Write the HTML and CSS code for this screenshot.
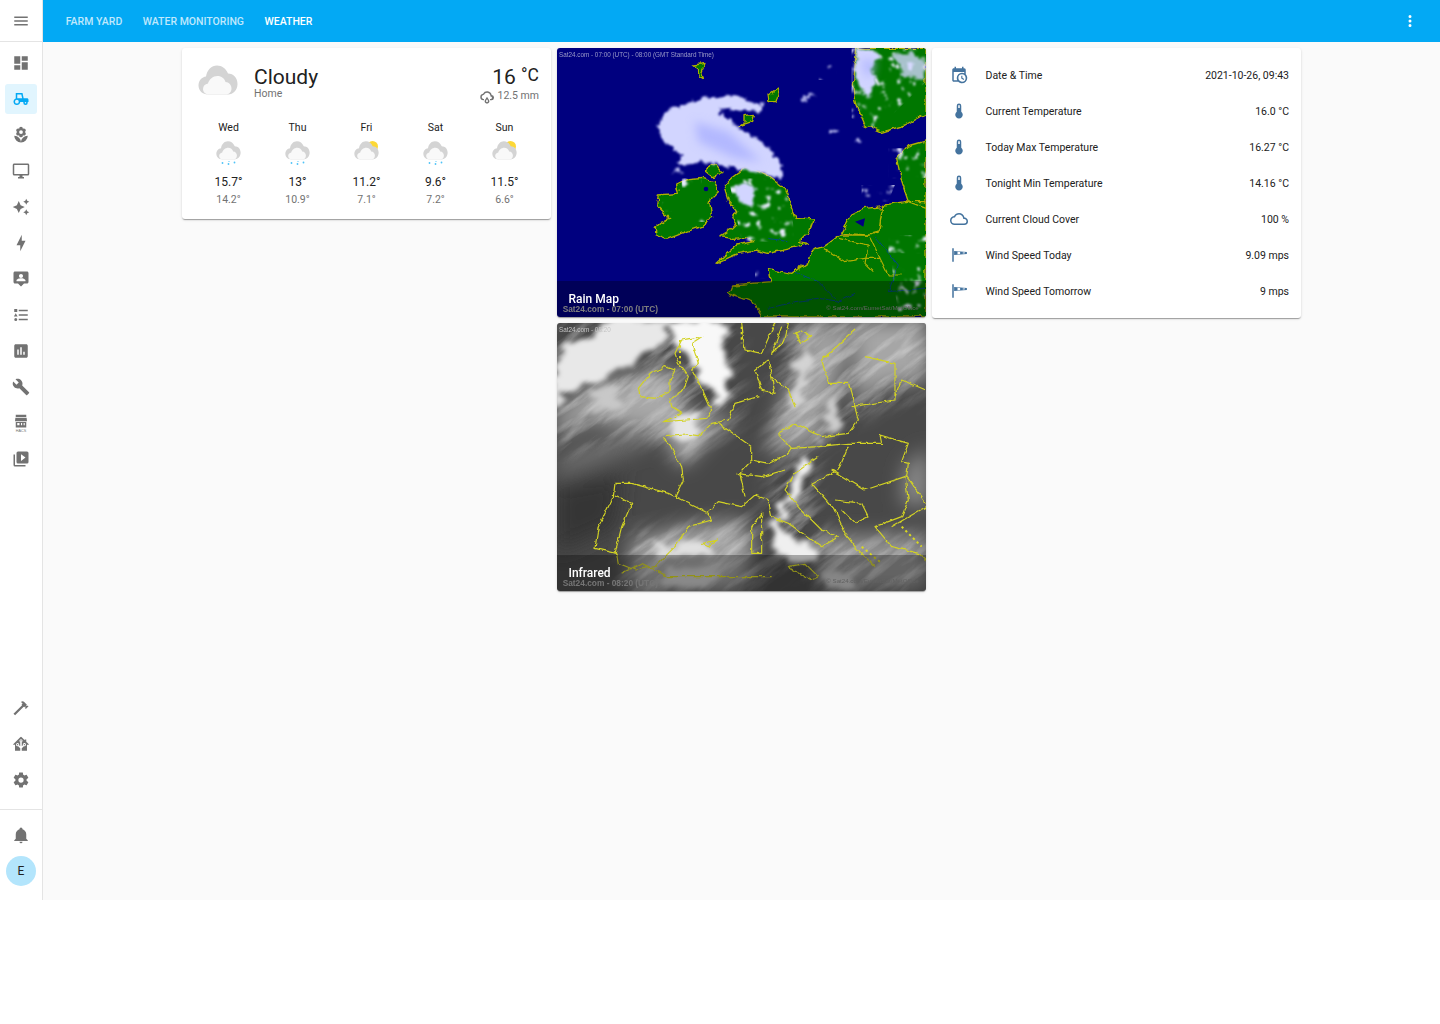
FILE: index.html
```html
<!DOCTYPE html>
<html>
<head>
    <title>Weather - Home Assistant</title>
    <link rel="stylesheet" href="styles.css">
</head>
<body>
    <!-- Shared weather icon parts and map filters -->
    <svg class="defs" width="0" height="0">
        <defs>
            <symbol id="cloud-back" viewBox="0 0 40 30">
                <path d="M10 29.5C4.5 29.5 .5 25.5.5 20.5.5 15.5 4 12 8 11.500 9 5 13.500 .5 19 .5 24 .5 28 3.500 30 8.500 35.500 8.500 39.500 13 39.500 19 39.500 25 35 29.500 30 29.500Z"/>
            </symbol>
            <symbol id="cloud-front" viewBox="0 0 40 30">
                <path d="M11 29.500C7.500 29.500 5 27 5 24 5 21 7 19 10 18.500 11 14.500 15 11 19.500 11 23.500 11 26.500 13.500 27.500 17 31 17 33.500 20 33.500 23.500 33.500 27 31 29.500 28 29.500Z"/>
            </symbol>
            <filter id="coast" x="-10%" y="-10%" width="120%" height="120%">
                <feTurbulence type="fractalNoise" baseFrequency="0.035" numOctaves="3" seed="4" result="n"/>
                <feDisplacementMap in="SourceGraphic" in2="n" scale="20" xChannelSelector="R" yChannelSelector="G"/>
                <feGaussianBlur stdDeviation="1.200"/>
            </filter>
            <filter id="rainedge" x="-10%" y="-10%" width="120%" height="120%">
                <feTurbulence type="fractalNoise" baseFrequency="0.05" numOctaves="3" seed="11" result="n"/>
                <feDisplacementMap in="SourceGraphic" in2="n" scale="26" xChannelSelector="R" yChannelSelector="G"/>
                <feGaussianBlur stdDeviation="2.500"/>
            </filter>
            <filter id="speck" x="0" y="0" width="100%" height="100%">
                <feTurbulence type="fractalNoise" baseFrequency="0.04" numOctaves="3" seed="23"/>
                <feColorMatrix values="0 0 0 0 .82  0 0 0 0 .84  0 0 0 0 1  8 0 0 0 -5"/>
                <feGaussianBlur stdDeviation="3"/>
            </filter>
            <filter id="softer"><feGaussianBlur stdDeviation="14"/></filter>
            <filter id="softest"><feGaussianBlur stdDeviation="30"/></filter>
            <filter id="cloudy" x="-20%" y="-20%" width="140%" height="140%">
                <feTurbulence type="fractalNoise" baseFrequency="0.012 0.03" numOctaves="4" seed="9" result="n"/>
                <feDisplacementMap in="SourceGraphic" in2="n" scale="80" xChannelSelector="R" yChannelSelector="G"/>
                <feGaussianBlur stdDeviation="8"/>
            </filter>
            <filter id="wisps" x="0" y="0" width="100%" height="100%">
                <feTurbulence type="fractalNoise" baseFrequency="0.006 0.035" numOctaves="5" seed="7"/>
                <feColorMatrix values="0 0 0 0 1  0 0 0 0 1  0 0 0 0 1  3.200 0 0 0 -1.300"/>
            </filter>
            <filter id="lines" x="-5%" y="-5%" width="110%" height="110%">
                <feTurbulence type="fractalNoise" baseFrequency="0.05" numOctaves="2" seed="3" result="n"/>
                <feDisplacementMap in="SourceGraphic" in2="n" scale="12" xChannelSelector="R" yChannelSelector="G"/>
                <feGaussianBlur stdDeviation="0.600"/>
            </filter>
        </defs>
    </svg>

    <div class="app">
        <!-- Sidebar -->
        <aside class="sidebar">
            <div class="sidebar-top">
                <svg class="icon" viewBox="0 0 24 24"><path d="M3,6H21V8H3V6M3,11H21V13H3V11M3,16H21V18H3V16Z"/></svg>
            </div>
            <nav class="nav-list">
                <a class="nav-item"><svg class="icon" viewBox="0 0 24 24"><path d="M13,3V9H21V3M13,21H21V11H13M3,21H11V15H3M3,13H11V3H3V13Z"/></svg></a>
                <a class="nav-item active"><svg class="icon" viewBox="0 0 24 24"><path d="M5,4V11.26C3.2,11.9 2,13.6 2,15.5C2,18 4,20 6.5,20C8.79,20 10.71,18.28 10.97,16H15.17C15.06,16.32 15,16.66 15,17A3,3 0 0,0 18,20A3,3 0 0,0 21,17C21,16.66 20.94,16.32 20.82,16H22V13C22,11.89 21.11,11 20,11H15.53L14.05,4H5M7,6H12.4L13.5,11H11C9.9,11 9,11.2 7,11V6M6.5,13A2.5,2.5 0 0,1 9,15.5A2.5,2.5 0 0,1 6.5,18A2.5,2.5 0 0,1 4,15.5A2.5,2.5 0 0,1 6.5,13M18,16A1,1 0 0,1 19,17A1,1 0 0,1 18,18A1,1 0 0,1 17,17A1,1 0 0,1 18,16Z"/></svg></a>
                <a class="nav-item"><svg class="icon" viewBox="0 0 24 24"><path d="M3,13A9,9 0 0,0 12,22C12,17 7.97,13 3,13M12,5.5A2.5,2.5 0 0,1 14.5,8A2.5,2.5 0 0,1 12,10.5A2.5,2.5 0 0,1 9.5,8A2.5,2.5 0 0,1 12,5.5M5.6,10.25A2.5,2.5 0 0,0 8.1,12.75C8.63,12.75 9.12,12.58 9.5,12.31C9.5,12.37 9.5,12.43 9.5,12.5A2.5,2.5 0 0,0 12,15A2.5,2.5 0 0,0 14.5,12.5C14.5,12.43 14.5,12.37 14.5,12.31C14.88,12.58 15.37,12.75 15.9,12.75C17.28,12.75 18.4,11.63 18.4,10.25C18.4,9.25 17.81,8.4 16.97,8C17.81,7.6 18.4,6.74 18.4,5.75C18.4,4.37 17.28,3.25 15.9,3.25C15.37,3.25 14.88,3.41 14.5,3.69C14.5,3.63 14.5,3.56 14.5,3.5A2.5,2.5 0 0,0 12,1A2.5,2.5 0 0,0 9.5,3.5C9.5,3.56 9.5,3.63 9.5,3.69C9.12,3.41 8.63,3.25 8.1,3.25A2.5,2.5 0 0,0 5.6,5.75C5.6,6.74 6.19,7.6 7.03,8C6.19,8.4 5.6,9.25 5.6,10.25M12,22A9,9 0 0,0 21,13C16,13 12,17 12,22Z"/></svg></a>
                <a class="nav-item"><svg class="icon" viewBox="0 0 24 24"><path d="M21,16H3V4H21M21,2H3C1.89,2 1,2.89 1,4V16A2,2 0 0,0 3,18H10V20H8V22H16V20H14V18H21A2,2 0 0,0 23,16V4C23,2.89 22.1,2 21,2Z"/></svg></a>
                <a class="nav-item"><svg class="icon" viewBox="0 0 24 24"><path d="M19,1L17.74,3.75L15,5L17.74,6.26L19,9L20.25,6.26L23,5L20.25,3.75M9,4L6.5,9.5L1,12L6.5,14.5L9,20L11.5,14.5L17,12L11.5,9.5M19,15L17.74,17.74L15,19L17.74,20.25L19,23L20.25,20.25L23,19L20.25,17.74"/></svg></a>
                <a class="nav-item"><svg class="icon" viewBox="0 0 24 24"><path d="M11,15H6L13,1V9H18L11,23V15Z"/></svg></a>
                <a class="nav-item"><svg class="icon" viewBox="0 0 24 24"><path d="M20 2H4C2.9 2 2 2.9 2 4V16C2 17.1 2.9 18 4 18H8L12 22L16 18H20C21.1 18 22 17.1 22 16V4C22 2.9 21.1 2 20 2M12 5.3C13.5 5.3 14.7 6.5 14.7 8C14.7 9.5 13.5 10.7 12 10.7C10.5 10.7 9.3 9.5 9.3 8C9.3 6.5 10.5 5.3 12 5.3M18 15H6V14.1C6 12.1 10 11 12 11C14 11 18 12.1 18 14.1V15Z"/></svg></a>
                <a class="nav-item"><svg class="icon" viewBox="0 0 24 24"><path d="M5,9.5L7.5,14H2.5L5,9.5M3,4H7V8H3V4M5,20A2,2 0 0,0 7,18A2,2 0 0,0 5,16A2,2 0 0,0 3,18A2,2 0 0,0 5,20M9,5V7H21V5H9M9,19H21V17H9V19M9,13H21V11H9V13Z"/></svg></a>
                <a class="nav-item"><svg class="icon" viewBox="0 0 24 24"><path fill-rule="evenodd" d="M19,3H5C3.9,3 3,3.9 3,5V19C3,20.1 3.9,21 5,21H19C20.1,21 21,20.1 21,19V5C21,3.9 20.1,3 19,3ZM9,17H7V10H9V17ZM13,17H11V7H13V17ZM17,17H15V13H17V17Z"/></svg></a>
                <a class="nav-item"><svg class="icon" viewBox="0 0 24 24"><path d="M22.7,19L13.6,9.9C14.5,7.6 14,4.9 12.1,3C10.1,1 7.1,0.6 4.7,1.7L9,6L6,9L1.6,4.7C0.4,7.1 0.9,10.1 2.9,12.1C4.8,14 7.5,14.5 9.8,13.6L18.9,22.7C19.3,23.1 19.9,23.1 20.3,22.7L22.6,20.4C23.1,20 23.1,19.3 22.7,19Z"/></svg></a>
                <a class="nav-item"><svg class="icon" viewBox="0 0 24 24"><path fill-rule="evenodd" d="M5,1H19V4H5ZM4.500,5H19.500L20,9.500H4ZM5,10.500H19V18H5ZM7,12V15H10V12ZM12,12V15H13.500V12ZM15.500,12V15H17V12Z"/><text class="hacs-text" x="12" y="23.500" text-anchor="middle">HACS</text></svg></a>
                <a class="nav-item"><svg class="icon" viewBox="0 0 24 24"><path d="M4,6H2V20A2,2 0 0,0 4,22H18V20H4V6M20,2H8A2,2 0 0,0 6,4V16A2,2 0 0,0 8,18H20A2,2 0 0,0 22,16V4A2,2 0 0,0 20,2M12,14.5V5.5L18,10L12,14.5Z"/></svg></a>
            </nav>
            <div class="nav-list">
                <a class="nav-item"><svg class="icon" viewBox="0 0 24 24"><path d="M2 19.63L13.43 8.2L12.72 7.5L14.14 6.07L12 3.89C13.2 2.7 15.09 2.7 16.27 3.89L19.87 7.5L18.45 8.91H21.29L22 9.62L18.45 13.21L17.74 12.5V9.62L16.27 11.04L15.56 10.33L4.13 21.76L2 19.63Z"/></svg></a>
                <a class="nav-item"><svg class="icon" viewBox="0 0 24 24"><path d="M21.8,13H20V21H13V17.67L15.79,14.88L16.5,15C17.66,15 18.6,14.06 18.6,12.9C18.6,11.74 17.66,10.8 16.5,10.8A2.1,2.1 0 0,0 14.4,12.9L14.5,13.61L13,15.13V9.65C13.66,9.29 14.1,8.6 14.1,7.8A2.1,2.1 0 0,0 12,5.7A2.1,2.1 0 0,0 9.9,7.8C9.9,8.6 10.34,9.29 11,9.65V15.13L9.5,13.61L9.6,12.9A2.1,2.1 0 0,0 7.5,10.8A2.1,2.1 0 0,0 5.4,12.9A2.1,2.1 0 0,0 7.5,15L8.21,14.88L11,17.67V21H4V13H2.25C1.83,13 1.42,13 1.42,12.79C1.43,12.57 1.85,12.15 2.28,11.72L11,3C11.33,2.67 11.67,2.33 12,2.33C12.33,2.33 12.67,2.67 13,3L17,7V6H19V9L21.78,11.78C22.18,12.18 22.59,12.59 22.6,12.8C22.6,13 22.2,13 21.8,13M7.5,12A0.9,0.9 0 0,1 8.4,12.9A0.9,0.9 0 0,1 7.5,13.8A0.9,0.9 0 0,1 6.6,12.9A0.9,0.9 0 0,1 7.5,12M16.5,12C17,12 17.4,12.4 17.4,12.9C17.4,13.4 17,13.8 16.5,13.8A0.9,0.9 0 0,1 15.6,12.9A0.9,0.9 0 0,1 16.5,12M12,6.9C12.5,6.9 12.9,7.3 12.9,7.8C12.9,8.3 12.5,8.7 12,8.7C11.5,8.7 11.1,8.3 11.1,7.8C11.1,7.3 11.5,6.9 12,6.9Z"/></svg></a>
                <a class="nav-item"><svg class="icon" viewBox="0 0 24 24"><path d="M12,15.5A3.5,3.5 0 0,1 8.5,12A3.5,3.5 0 0,1 12,8.5A3.5,3.5 0 0,1 15.5,12A3.5,3.5 0 0,1 12,15.5M19.43,12.97C19.47,12.65 19.5,12.33 19.5,12C19.5,11.67 19.47,11.34 19.43,11L21.54,9.37C21.73,9.22 21.78,8.95 21.66,8.73L19.66,5.27C19.54,5.05 19.27,4.96 19.05,5.05L16.56,6.05C16.04,5.66 15.5,5.32 14.87,5.07L14.5,2.42C14.46,2.18 14.25,2 14,2H10C9.75,2 9.54,2.18 9.5,2.42L9.13,5.07C8.5,5.32 7.96,5.66 7.44,6.05L4.95,5.05C4.73,4.96 4.46,5.05 4.34,5.27L2.34,8.73C2.21,8.95 2.27,9.22 2.46,9.37L4.57,11C4.53,11.34 4.5,11.67 4.5,12C4.5,12.33 4.53,12.65 4.57,12.97L2.46,14.63C2.27,14.78 2.21,15.05 2.34,15.27L4.34,18.73C4.46,18.95 4.73,19.03 4.95,18.95L7.44,17.94C7.96,18.34 8.5,18.68 9.13,18.93L9.5,21.58C9.54,21.82 9.75,22 10,22H14C14.25,22 14.46,21.82 14.5,21.58L14.87,18.93C15.5,18.67 16.04,18.34 16.56,17.94L19.05,18.95C19.27,19.03 19.54,18.95 19.66,18.73L21.66,15.27C21.78,15.05 21.73,14.78 21.54,14.63L19.43,12.97Z"/></svg></a>
            </div>
            <div class="sidebar-divider"></div>
            <div class="nav-list">
                <a class="nav-item"><svg class="icon" viewBox="0 0 24 24"><path d="M21,19V20H3V19L5,17V11C5,7.9 7.03,5.17 10,4.29C10,4.19 10,4.1 10,4A2,2 0 0,1 12,2A2,2 0 0,1 14,4C14,4.1 14,4.19 14,4.29C16.97,5.17 19,7.9 19,11V17L21,19M14,21A2,2 0 0,1 12,23A2,2 0 0,1 10,21"/></svg></a>
                <a class="nav-item"><span class="avatar">E</span></a>
            </div>
        </aside>

        <div class="main">
            <!-- Top tabs -->
            <header class="topbar">
                <div class="tabs">
                    <a class="tab">FARM YARD</a>
                    <a class="tab">WATER MONITORING</a>
                    <a class="tab selected">WEATHER</a>
                </div>
                <svg class="icon dots" viewBox="0 0 24 24"><path d="M12,16A2,2 0 0,1 14,18A2,2 0 0,1 12,20A2,2 0 0,1 10,18A2,2 0 0,1 12,16M12,10A2,2 0 0,1 14,12A2,2 0 0,1 12,14A2,2 0 0,1 10,12A2,2 0 0,1 12,10M12,4A2,2 0 0,1 14,6A2,2 0 0,1 12,8A2,2 0 0,1 10,6A2,2 0 0,1 12,4Z"/></svg>
            </header>

            <div class="view">
                <!-- Weather card -->
                <div class="column">
                    <div class="card weather-card">
                        <div class="weather-head">
                            <svg class="wx-big"><use href="#cloud-back" class="wx-back"/><use href="#cloud-front" class="wx-front"/></svg>
                            <div class="weather-name">
                                <div class="state">Cloudy</div>
                                <div class="place">Home</div>
                            </div>
                            <div class="weather-now">
                                <div class="now-temp">16 <span class="now-unit">°C</span></div>
                                <div class="now-rain">
                                    <svg class="rain-icon" viewBox="0 0 24 24"><path d="M6.500 18.500A5 5 0 0 1 6 8.600 7 7 0 0 1 19 10.500 4 4 0 0 1 18 18.500H16.500V16.500H18A2 2 0 0 0 17.200 12.600L17 11A5 5 0 0 0 7.500 10.200L6.500 10.600A3 3 0 0 0 6.500 16.500H7.500V18.500ZM12 13L15 18A3.500 3.500 0 1 1 9 18ZM12 16.800L10.800 18.800A1.500 1.500 0 1 0 13.200 18.800Z"/></svg>
                                    12.5 mm
                                </div>
                            </div>
                        </div>
                        <div class="forecast">
                            <div class="day">
                                <div class="day-name">Wed</div>
                                <svg class="wx-small" viewBox="0 0 25 25"><use href="#cloud-back" class="wx-back" width="25" height="18.700"/><use href="#cloud-front" class="wx-front" width="25" height="18.700"/><g class="wx-drops"><circle cx="6.500" cy="22" r=".9"/><circle cx="12.500" cy="23" r=".9"/><circle cx="18.500" cy="21.500" r=".9"/><circle cx="13" cy="20.500" r=".6"/></g></svg>
                                <div class="day-high">15.7°</div>
                                <div class="day-low">14.2°</div>
                            </div>
                            <div class="day">
                                <div class="day-name">Thu</div>
                                <svg class="wx-small" viewBox="0 0 25 25"><use href="#cloud-back" class="wx-back" width="25" height="18.700"/><use href="#cloud-front" class="wx-front" width="25" height="18.700"/><g class="wx-drops"><circle cx="6.500" cy="22" r=".9"/><circle cx="12.500" cy="23" r=".9"/><circle cx="18.500" cy="21.500" r=".9"/><circle cx="13" cy="20.500" r=".6"/></g></svg>
                                <div class="day-high">13°</div>
                                <div class="day-low">10.9°</div>
                            </div>
                            <div class="day">
                                <div class="day-name">Fri</div>
                                <svg class="wx-small" viewBox="0 0 25 25"><circle class="wx-sun" cx="18.500" cy="5.500" r="5.500"/><use href="#cloud-back" class="wx-back" width="25" height="18.700"/><use href="#cloud-front" class="wx-front" width="25" height="18.700"/></svg>
                                <div class="day-high">11.2°</div>
                                <div class="day-low">7.1°</div>
                            </div>
                            <div class="day">
                                <div class="day-name">Sat</div>
                                <svg class="wx-small" viewBox="0 0 25 25"><use href="#cloud-back" class="wx-back" width="25" height="18.700"/><use href="#cloud-front" class="wx-front" width="25" height="18.700"/><g class="wx-drops"><circle cx="6.500" cy="22" r=".9"/><circle cx="12.500" cy="23" r=".9"/><circle cx="18.500" cy="21.500" r=".9"/><circle cx="13" cy="20.500" r=".6"/></g></svg>
                                <div class="day-high">9.6°</div>
                                <div class="day-low">7.2°</div>
                            </div>
                            <div class="day">
                                <div class="day-name">Sun</div>
                                <svg class="wx-small" viewBox="0 0 25 25"><circle class="wx-sun" cx="18.500" cy="5.500" r="5.500"/><use href="#cloud-back" class="wx-back" width="25" height="18.700"/><use href="#cloud-front" class="wx-front" width="25" height="18.700"/></svg>
                                <div class="day-high">11.5°</div>
                                <div class="day-low">6.6°</div>
                            </div>
                        </div>
                    </div>
                </div>

                <!-- Satellite pictures -->
                <div class="column">
                    <div class="card picture-card">
                        <svg class="map map-rain" viewBox="6 9 1107 807" preserveAspectRatio="none">
                            <defs>
                                <clipPath id="rain-zones">
                                    <path d="M520 400 700 400 720 590 560 590ZM380 400 440 400 440 430 380 430ZM320 470 350 470 350 500 320 500ZM425 505 450 505 450 530 425 530ZM890 10H1113V110L960 260 890 220ZM1000 310H1113V400L1000 400ZM920 420 1020 420 1000 470 920 470ZM1000 570H1113V625L1000 625ZM790 55 845 55 845 105 790 105ZM1010 660 1113 660V816H1030ZM600 660 640 660 640 700 600 700Z"/>
                                </clipPath>
                            </defs>
                            <rect x="0" y="0" width="1120" height="820" fill="#00007f"/>
                            <g fill="#007700" stroke="#b0b000" stroke-width="4" stroke-linejoin="round" filter="url(#coast)">
                                <path d="M298 550 320 530 345 520 305 480 310 450 370 445 365 420 395 405 440 400 475 410 490 440 470 460 465 480 470 520 440 545 395 560 335 583 300 570Z"/>
                                <path d="M483 655 510 630 545 600 600 590 570 578 530 580 498 575 530 555 545 540 530 510 545 500 520 470 505 420 530 395 570 365 640 390 690 430 705 480 720 520 775 525 765 555 730 590 760 595 700 612 640 625 600 615 550 625Z"/>
                                <path d="M450 375 480 355 505 385 475 395Z"/>
                                <path d="M570 212 595 208 590 232 552 245 570 232Z"/>
                                <path d="M905 10H1113V205L1050 240 980 262 930 240 905 180 895 120 900 60Z"/>
                                <path d="M1113 285 1060 300 1025 340 1040 410 1060 470 1113 490Z"/>
                                <path d="M1113 816V470L1050 470 985 480 975 560 940 570 860 570 800 610 770 620 760 650 710 685 640 670 650 710 530 720 520 745 590 770 620 816Z"/>
                                <path d="M860 565 890 510 930 490 985 485 975 560 940 570Z"/>
                                <path d="M415 60 450 55 440 80 445 98 432 90 430 72Z"/>
                                <path d="M642 150 672 128 660 170 645 170Z"/>
                            </g>
                            <g fill="none" stroke="#b0b000" stroke-width="3.500" filter="url(#lines)">
                                <path d="M805 610 870 650 930 640 975 640 1000 690 1040 690"/>
                                <path d="M850 580 940 600 930 655 955 680"/>
                                <path d="M945 575 975 640M1060 470 1113 490"/>
                            </g>
                            <g fill="none" stroke="#004a80" stroke-width="3" filter="url(#lines)">
                                <path d="M720 682 790 710 850 770 900 745"/>
                                <path d="M640 790 720 770 790 760 860 770"/>
                                <path d="M960 575 1030 660 1000 740 1113 730"/>
                                <path d="M640 580 700 590"/>
                            </g>
                            <circle cx="453" cy="432" r="7" fill="#00007f"/>
                            <path d="M900 530 930 520 925 545Z" fill="#00007f"/>
                            <g clip-path="url(#rain-zones)">
                                <rect x="0" y="0" width="1120" height="820" filter="url(#speck)"/>
                            </g>
                            <g fill="#d2d5ff" filter="url(#rainedge)">
                                <path d="M305 245 340 195 440 160 540 150 625 178 615 200 510 190 490 200 540 240 590 270 640 305 680 360 680 400 640 392 560 372 500 362 440 350 380 362 375 330 320 280Z"/>
                                <path d="M360 370 380 375 375 388 358 380Z"/>
                                <path d="M740 160 780 145 770 155 745 165ZM825 250 850 260 825 265ZM890 285 920 285 915 295Z"/>
                                <path d="M905 10 950 10 975 40 945 70 965 110 940 160 915 130 900 80Z"/>
                                <path d="M1010 30 1070 20 1110 50 1105 105 1050 95 1030 60Z" opacity=".8"/>
                                <path d="M535 425 570 412 600 430 590 490 555 470Z"/>
                            </g>
                            <g fill="#b2b8ff" filter="url(#softer)">
                                <path d="M420 230 520 260 620 350 540 340 430 290Z"/>
                                <path d="M920 40 960 50 945 100 930 90Z"/>
                            </g>
                            <text class="map-text" x="12" y="37" font-size="19" fill="#9a9ac8">Sat24.com - 07:00 (UTC) - 08:00 (GMT Standard Time)</text>
                            <text class="map-text" x="814" y="794" font-size="18.500" fill="#8c8c8c">© Sat24.com/EumetSat/MetOffice</text>
                            <text class="map-stamp" x="23" y="800" font-size="25" fill="#b4b4b4">Sat24.com - 07:00 (UTC)</text>
                        </svg>
                        <div class="picture-caption">Rain Map</div>
                    </div>
                    <div class="card picture-card">
                        <svg class="map map-ir" viewBox="6 9 1107 804" preserveAspectRatio="none">
                            <defs>
                                <mask id="cloud-zones">
                                    <g fill="#fff" filter="url(#softest)">
                                        <path d="M0 0H540L560 300 400 420 240 340 0 400Z"/>
                                        <path d="M680 0H1120V220L860 300 800 400 640 420Z"/>
                                        <path d="M220 640 600 590 620 816H200Z"/>
                                        <path d="M640 480 780 400 800 720 640 760Z"/>
                                        <path d="M780 660H1120V816H780Z"/>
                                    </g>
                                </mask>
                            </defs>
                            <rect x="0" y="0" width="1120" height="820" fill="#484848"/>
                            <g filter="url(#softest)">
                                <path d="M0 290 100 200 200 170 350 140 400 300 350 340 230 320 100 300 0 350Z" fill="#a8a8a8"/>
                                <path d="M0 430 100 370 240 330 300 370 120 430 0 470Z" fill="#727272"/>
                                <path d="M350 300 540 280 480 340 380 440 340 380Z" fill="#a8a8a8"/>
                                <path d="M680 250 760 9 900 9 850 180 800 350 700 400 640 400Z" fill="#a0a0a0"/>
                                <path d="M900 0H1120V180L980 200 900 260Z" fill="#a6a6a6"/>
                                <path d="M230 660 380 620 560 600 600 680 560 816 220 816Z" fill="#a0a0a0"/>
                                <path d="M800 650 1120 640V816H800Z" fill="#909090"/>
                                <path d="M1050 440 1120 380V560L1040 550Z" fill="#8e8e8e"/>
                                <path d="M0 500 200 460 180 620 0 700Z" fill="#343434"/>
                            </g>
                            <g mask="url(#cloud-zones)">
                                <g transform="rotate(-38 560 400)">
                                    <rect x="-400" y="-500" width="1920" height="1800" filter="url(#wisps)" opacity=".32"/>
                                </g>
                            </g>
                            <g filter="url(#cloudy)">
                                <path d="M345 0 505 0 520 190 510 250 450 190 375 90Z" fill="#f8f8f8"/>
                                <path d="M0 110 160 0 350 0 300 100 200 140 100 180 0 260Z" fill="#e8e8e8"/>
                                <path d="M360 300 430 290 420 340 370 370Z" fill="#e6e6e6"/>
                                <path d="M115 200 190 190 180 270 120 270Z" fill="#c8c8c8"/>
                                <path d="M660 700 650 620 700 490 755 400 770 430 710 540 680 610 770 680 780 710 700 730Z" fill="#efefef"/>
                                <path d="M820 240 860 200 850 330 800 350Z" fill="#cccccc"/>
                                <path d="M720 160 770 60 740 240 700 260Z" fill="#d4d4d4"/>
                                <path d="M290 680 440 650 480 700 330 720Z" fill="#e0e0e0"/>
                                <path d="M330 750 500 740 470 800 330 800Z" fill="#c4c4c4"/>
                                <path d="M810 750 900 740 890 800 810 800Z" fill="#c0c0c0"/>
                            </g>
                            <g fill="none" stroke="#d2d224" stroke-width="3.500" stroke-linejoin="round" filter="url(#lines)">
                                <path d="M120 685 130 620 175 530 180 490 230 490 340 520 460 580 470 600 400 620 360 680 300 740 240 750 190 730 185 700Z"/>
                                <path d="M180 525 230 550 200 620 180 700"/>
                                <path d="M325 355 345 375 380 440 385 480 360 530"/>
                                <path d="M330 350 390 345 430 350 470 310 520 300 540 250 610 230"/>
                                <path d="M460 575 490 545 560 560 600 525 640 540 650 590 700 610 800 680 850 650 800 630 740 570 690 510 720 460 790 410"/>
                                <path d="M255 230 250 205 285 160 330 140 360 150 345 180 345 215 300 235Z"/>
                                <path d="M440 50 410 70 430 130 410 150 445 215 470 270 455 295 395 300 325 305 380 280 350 260 345 235 385 210 400 170 370 130 360 100 380 60Z"/>
                                <path d="M560 9 570 90 620 100 660 9M700 9 690 60 650 100 680 20M740 30 770 50 740 70 720 40Z"/>
                                <path d="M600 150 640 120 660 220 620 210ZM650 170 700 210 720 260 700 210Z"/>
                                <path d="M490 310 590 380 590 420 555 460 570 530"/>
                                <path d="M670 340 720 310 800 350 880 340 910 300 880 190 820 190 800 120 900 30"/>
                                <path d="M670 340 710 385 790 380 880 370 980 370 975 345 1060 370 1040 425 1060 430 1055 470 1113 550"/>
                                <path d="M590 420 640 430 700 400 710 385M545 460 620 470 690 450"/>
                                <path d="M890 260 1020 240 1020 130 930 110M1020 230 1040 180 1113 210"/>
                                <path d="M830 450 930 510 1050 470 1060 540 1040 590 960 620 1010 680 1090 700 1113 720"/>
                                <path d="M770 490 850 450 880 380M770 490 840 570 870 640 900 680 960 740"/>
                                <path d="M840 540 920 550 940 590 900 610 860 570"/>
                                <path d="M1010 620 1113 560"/>
                                <path d="M590 620 620 580 620 700 590 700Z"/>
                                <path d="M440 670 490 660 460 680ZM700 740 750 730 790 770 770 780ZM200 760 260 730 340 770 520 770 650 770"/>
                            </g>
                            <g fill="none" stroke="#d8d820" stroke-width="6" stroke-dasharray="7 9">
                                <path d="M375 60V140M1040 620 1100 680M920 680 980 730M560 20V70"/>
                            </g>
                            <text class="map-text" x="12" y="36" font-size="19" fill="#c4c4c4">Sat24.com - 08:20</text>
                            <text class="map-text" x="814" y="790" font-size="18.500" fill="#8c8c8c">© Sat24.com/EumetSat/MetOffice</text>
                            <text class="map-stamp" x="23" y="797" font-size="25" fill="#a8a8a8">Sat24.com - 08:20 (UTC)</text>
                        </svg>
                        <div class="picture-caption">Infrared</div>
                    </div>
                </div>

                <!-- Entities card -->
                <div class="column">
                    <div class="card entities-card">
                        <div class="entity">
                            <svg class="icon" viewBox="0 0 24 24"><path d="M15,13H16.5V15.82L18.94,17.23L18.19,18.53L15,16.69V13M19,8H5V19H9.67C9.24,18.09 9,17.07 9,16A7,7 0 0,1 16,9C17.07,9 18.09,9.24 19,9.67V8M5,21C3.89,21 3,20.1 3,19V5C3,3.89 3.89,3 5,3H6V1H8V3H16V1H18V3H19A2,2 0 0,1 21,5V11.1C22.24,12.36 23,14.09 23,16A7,7 0 0,1 16,23C14.09,23 12.36,22.24 11.1,21H5M16,11.15A4.85,4.85 0 0,0 11.15,16C11.15,18.68 13.32,20.85 16,20.85A4.85,4.85 0 0,0 20.85,16C20.85,13.32 18.68,11.15 16,11.15Z"/></svg>
                            <span class="entity-name">Date &amp; Time</span>
                            <span class="entity-value">2021-10-26, 09:43</span>
                        </div>
                        <div class="entity">
                            <svg class="icon" viewBox="0 0 24 24"><path d="M15 13V5A3 3 0 0 0 9 5V13A5 5 0 1 0 15 13M12 4A1 1 0 0 1 13 5V8H11V5A1 1 0 0 1 12 4Z"/></svg>
                            <span class="entity-name">Current Temperature</span>
                            <span class="entity-value">16.0 °C</span>
                        </div>
                        <div class="entity">
                            <svg class="icon" viewBox="0 0 24 24"><path d="M15 13V5A3 3 0 0 0 9 5V13A5 5 0 1 0 15 13M12 4A1 1 0 0 1 13 5V8H11V5A1 1 0 0 1 12 4Z"/></svg>
                            <span class="entity-name">Today Max Temperature</span>
                            <span class="entity-value">16.27 °C</span>
                        </div>
                        <div class="entity">
                            <svg class="icon" viewBox="0 0 24 24"><path d="M15 13V5A3 3 0 0 0 9 5V13A5 5 0 1 0 15 13M12 4A1 1 0 0 1 13 5V8H11V5A1 1 0 0 1 12 4Z"/></svg>
                            <span class="entity-name">Tonight Min Temperature</span>
                            <span class="entity-value">14.16 °C</span>
                        </div>
                        <div class="entity">
                            <svg class="icon" viewBox="0 0 24 24"><path d="M19.35,10.03C18.67,6.59 15.64,4 12,4C9.11,4 6.6,5.64 5.35,8.03C2.34,8.36 0,10.9 0,14A6,6 0 0,0 6,20H19A5,5 0 0,0 24,15C24,12.36 21.95,10.22 19.35,10.03M19,18H6A4,4 0 0,1 2,14C2,11.95 3.53,10.24 5.56,10.03L6.63,9.92L7.13,8.97C8.08,7.14 9.94,6 12,6C14.62,6 16.88,7.86 17.39,10.43L17.69,11.93L19.22,12.04C20.78,12.14 22,13.45 22,15A3,3 0 0,1 19,18Z"/></svg>
                            <span class="entity-name">Current Cloud Cover</span>
                            <span class="entity-value">100 %</span>
                        </div>
                        <div class="entity">
                            <svg class="icon" viewBox="0 0 24 24"><path fill-rule="evenodd" d="M3 3H5V21H3ZM5.500 6.500 22.500 8V10.500L5.500 12ZM10 7.600V10.900L13.500 10.600V7.900ZM17 8.500V10L20 9.800V8.700Z"/></svg>
                            <span class="entity-name">Wind Speed Today</span>
                            <span class="entity-value">9.09 mps</span>
                        </div>
                        <div class="entity">
                            <svg class="icon" viewBox="0 0 24 24"><path fill-rule="evenodd" d="M3 3H5V21H3ZM5.500 6.500 22.500 8V10.500L5.500 12ZM10 7.600V10.900L13.500 10.600V7.900ZM17 8.500V10L20 9.800V8.700Z"/></svg>
                            <span class="entity-name">Wind Speed Tomorrow</span>
                            <span class="entity-value">9 mps</span>
                        </div>
                    </div>
                </div>
            </div>
        </div>
    </div>
</body>
</html>
```

FILE: styles.css
```css
* {
    box-sizing: border-box;
}

body {
    margin: 0;
    background: #fff;
    color: #212121;
    font-family: Roboto, "Noto Sans", sans-serif;
    font-size: 10.5px;
}

.defs {
    position: absolute;
}

.app {
    display: flex;
    height: 900px;
}

.icon {
    display: block;
    width: 18px;
    height: 18px;
    fill: currentColor;
}

/* Sidebar */
.sidebar {
    display: flex;
    flex-direction: column;
    width: 43px;
    flex-shrink: 0;
    background: #fff;
    border-right: 1px solid #e4e4e4;
    color: #727272;
    padding-bottom: 14px;
}

.sidebar-top {
    display: flex;
    align-items: center;
    justify-content: center;
    height: 42px;
    border-bottom: 1px solid #e4e4e4;
    margin-bottom: 6px;
}

.nav-list {
    display: flex;
    flex-direction: column;
    gap: 6px;
}

nav.nav-list {
    flex: 1;
}

.nav-item {
    display: flex;
    align-items: center;
    justify-content: center;
    height: 30px;
    margin: 0 5px;
    border-radius: 3px;
}

.nav-item.active {
    background: #e1f5fe;
    color: #03a9f4;
}

.hacs-text {
    font-family: "Liberation Sans", sans-serif;
    font-size: 5px;
}

.sidebar-divider {
    height: 1px;
    background: #e4e4e4;
    margin: 14px 0 10px;
}

.avatar {
    display: flex;
    align-items: center;
    justify-content: center;
    width: 30px;
    height: 30px;
    flex-shrink: 0;
    border-radius: 50%;
    background: #b3e5fc;
    color: #212121;
    font-size: 12px;
}

/* Top bar */
.main {
    flex: 1;
    display: flex;
    flex-direction: column;
    background: #fafafa;
}

.topbar {
    display: flex;
    align-items: center;
    justify-content: space-between;
    height: 42px;
    padding: 0 21px 0 12.5px;
    background: #03a9f4;
    color: #fff;
}

.tabs {
    display: flex;
}

.tab {
    padding: 0 10.25px;
    font-size: 10.5px;
    font-weight: 500;
    color: rgba(255, 255, 255, 0.75);
}

.tab.selected {
    color: #fff;
}

/* Columns */
.view {
    display: flex;
    justify-content: center;
    gap: 6px;
    padding-top: 6px;
}

.column {
    display: flex;
    flex-direction: column;
    gap: 6px;
    width: 369px;
}

.card {
    background: #fff;
    border-radius: 3px;
    box-shadow: 0 2px 1px -1px rgba(0, 0, 0, 0.2), 0 1px 1px 0 rgba(0, 0, 0, 0.14), 0 1px 3px 0 rgba(0, 0, 0, 0.12);
}

/* Weather card */
.weather-card {
    padding: 17px 12px 12px;
}

.weather-head {
    display: flex;
    align-items: flex-start;
}

.wx-big {
    width: 40px;
    height: 30px;
    margin-left: 4px;
}

.wx-back {
    fill: #d4d4d4;
}

.wx-front {
    fill: #f9f9f9;
}

.wx-sun {
    fill: #fdd835;
}

.wx-drops {
    fill: #4fc3f7;
}

.weather-name {
    margin-left: 16px;
    flex: 1;
}

.state {
    font-size: 21px;
    line-height: 24px;
}

.place {
    line-height: 9px;
    color: #727272;
}

.weather-now {
    text-align: right;
}

.now-temp {
    font-size: 21px;
    line-height: 24px;
}

.now-unit {
    font-size: 17.5px;
    line-height: 0;
    vertical-align: 3px;
}

.now-rain {
    display: flex;
    align-items: center;
    justify-content: flex-end;
    gap: 3px;
    margin-top: -1px;
    line-height: 12px;
    color: #727272;
}

.rain-icon {
    width: 16px;
    height: 16px;
    fill: #727272;
}

.forecast {
    display: flex;
    margin-top: 17px;
}

.day {
    flex: 1;
    text-align: center;
}

.day-name {
    line-height: 14px;
}

.wx-small {
    display: block;
    width: 25px;
    height: 25px;
    margin: 6px auto 9px;
}

.day-high {
    font-size: 12px;
    line-height: 14px;
}

.day-low {
    margin-top: 4px;
    line-height: 14px;
    color: #727272;
}

/* Picture cards */
.picture-card {
    position: relative;
    overflow: hidden;
}

.map {
    display: block;
    width: 369px;
}

.map-rain {
    height: 269px;
}

.map-ir {
    height: 268px;
}

.map-text {
    font-family: "Liberation Sans", sans-serif;
}

.map-stamp {
    font-family: "Liberation Sans", sans-serif;
    font-weight: 700;
}

.picture-caption {
    position: absolute;
    left: 0;
    right: 0;
    bottom: 0;
    height: 36px;
    padding: 11px 11.5px 0;
    background: rgba(0, 0, 0, 0.3);
    color: #fff;
    font-size: 12px;
    font-weight: 500;
    line-height: 14px;
}

/* Entities card */
.entities-card {
    padding: 9px 12px;
}

.entity {
    display: flex;
    align-items: center;
    height: 36px;
}

.entity .icon {
    margin: 0 17.5px 0 6px;
    color: #44739e;
}

.entity-name {
    flex: 1;
}
```
